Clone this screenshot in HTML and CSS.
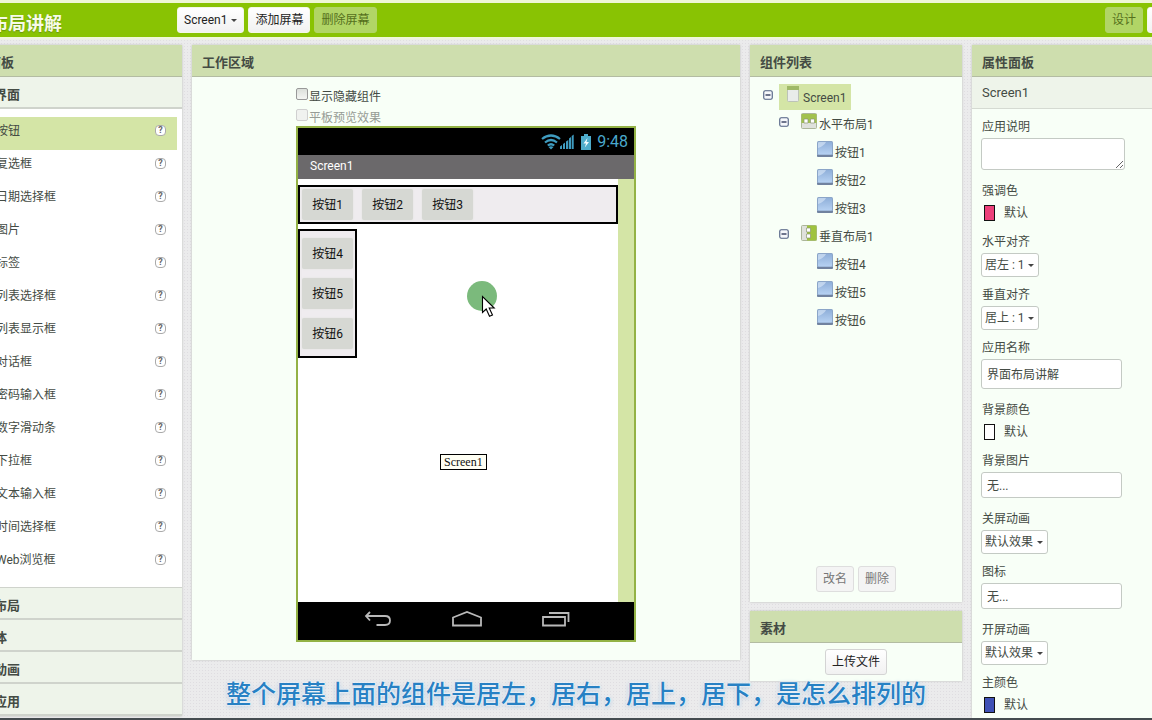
FILE: index.html
```html
<!DOCTYPE html>
<html lang="zh-CN">
<head>
<meta charset="utf-8">
<title>界面布局讲解</title>
<link rel="stylesheet" href="styles.css">
</head>
<body>
<svg class="defs" aria-hidden="true">
  <defs>
    <linearGradient id="blue" x1="0" y1="0" x2="0" y2="1"><stop offset="0" stop-color="#8fafd9"/><stop offset="1" stop-color="#b6d1f2"/></linearGradient>
    <symbol id="minus" viewBox="0 0 10 10"><rect x=".75" y=".75" width="8.5" height="8.5" rx="1.5" fill="#f6f8fb" stroke="#4d5d80" stroke-width="1.1"/><path d="M2.5 5h5" stroke="#222c50" stroke-width="1.3"/></symbol>
    <symbol id="button" viewBox="0 0 16 16"><rect width="16" height="16" rx="1.5" fill="#8ba5c8"/><rect x="1" y="1" width="14" height="12.5" rx="1" fill="url(#blue)"/><path d="M1 7V2q0-1 1-1h7Q7 5 1 7z" fill="#e4eefb" opacity=".55"/><path d="M0 14h16v.5q0 1.500-1.500 1.500h-13Q0 16 0 14.500z" fill="#71829f"/></symbol>
    <symbol id="screen" viewBox="0 0 12 16"><rect x=".5" y=".5" width="11" height="15" rx="1" fill="#e9ecea" stroke="#bcc3b8"/><path d="M0 0h12v4H0z" fill="#9fb967"/></symbol>
    <symbol id="horizontal" viewBox="0 0 16 16"><rect x=".5" y=".5" width="15" height="15" rx="1" fill="#dfe1dc" stroke="#acb69a"/><path d="M.5 1h15v9H.5z" fill="#a2c24e"/><path d="M3 6h4v4H3zM9.500 6h4v4h-4z" fill="#fff" stroke="#8b9673" stroke-width=".7"/></symbol>
    <symbol id="vertical" viewBox="0 0 16 16"><rect x=".5" y=".5" width="15" height="15" rx="1" fill="#dfe1dc" stroke="#acb69a"/><path d="M6 .5h9.500v15H6z" fill="#9fc33e"/><path d="M5.500 3h4v4h-4zM5.500 9h4v4h-4z" fill="#fff" stroke="#8b9673" stroke-width=".7"/></symbol>
  </defs>
</svg>
<div class="app">
  <header class="topbar">
    <h1 class="project">界面布局讲解</h1>
    <div class="actions">
      <button class="btn caret">Screen1</button>
      <button class="btn">添加屏幕</button>
      <button class="btn faded" disabled>删除屏幕</button>
    </div>
    <div class="views">
      <button class="btn faded" disabled>设计</button>
      <button class="btn">编程</button>
    </div>
  </header>

  <main class="columns">
    <section class="panel palette">
      <h2 class="panel-title">组件面板</h2>
      <button class="category open">用户界面</button>
      <ul class="items">
        <li class="item selected">按钮<button class="help" aria-label="帮助">?</button></li>
        <li class="item">复选框<button class="help" aria-label="帮助">?</button></li>
        <li class="item">日期选择框<button class="help" aria-label="帮助">?</button></li>
        <li class="item">图片<button class="help" aria-label="帮助">?</button></li>
        <li class="item">标签<button class="help" aria-label="帮助">?</button></li>
        <li class="item">列表选择框<button class="help" aria-label="帮助">?</button></li>
        <li class="item">列表显示框<button class="help" aria-label="帮助">?</button></li>
        <li class="item">对话框<button class="help" aria-label="帮助">?</button></li>
        <li class="item">密码输入框<button class="help" aria-label="帮助">?</button></li>
        <li class="item">数字滑动条<button class="help" aria-label="帮助">?</button></li>
        <li class="item">下拉框<button class="help" aria-label="帮助">?</button></li>
        <li class="item">文本输入框<button class="help" aria-label="帮助">?</button></li>
        <li class="item">时间选择框<button class="help" aria-label="帮助">?</button></li>
        <li class="item">Web浏览框<button class="help" aria-label="帮助">?</button></li>
      </ul>
      <button class="category">界面布局</button>
      <button class="category">多媒体</button>
      <button class="category">绘图动画</button>
      <button class="category">社交应用</button>
    </section>

    <section class="panel work">
      <h2 class="panel-title">工作区域</h2>
      <div class="stage">
        <label class="check"><input type="checkbox">显示隐藏组件</label>
        <label class="check off"><input type="checkbox" disabled>平板预览效果</label>
        <div class="phone">
          <div class="status">
            <svg width="34" height="16" viewBox="0 0 34 16" aria-hidden="true">
              <g fill="none" stroke="#3f9cc0" stroke-width="2.200"><path d="M1 5Q10-2 19 5"/><path d="M4 8.500q6-5 12 0"/><path d="M6.800 11.500q3.200-2.500 6.400 0"/></g><path d="M7.500 13q2.500-1.600 5 0L10 15.600z" fill="#3f9cc0"/>
              <path d="M19 15v-2.500l2-1.500v4zM22 15v-5l2-1.500V15zM25 15V7.500L27.300 6v9zM28 15V4.500l2-1.500v12zM30.700 15V2l2-1.500V15z" fill="#3f9cc0"/>
            </svg>
            <svg width="10" height="16" viewBox="0 0 10 16" aria-hidden="true"><path d="M3 0h4v2h3v14H0V2h3z" fill="#4faccb"/><path d="M6.500 4L2.500 9.500H5L3.800 13.500 8 8H5.500z" fill="#f3fcff"/></svg>
            <span class="clock">9:48</span>
          </div>
          <div class="app-title">Screen1</div>
          <div class="canvas">
            <div class="view">
              <div class="arrange row">
                <button class="tile">按钮1</button><button class="tile">按钮2</button><button class="tile">按钮3</button>
              </div>
              <div class="arrange col">
                <button class="tile">按钮4</button><button class="tile">按钮5</button><button class="tile">按钮6</button>
              </div>
              <div class="tip">Screen1</div>
              <svg class="pointer" width="32" height="38" viewBox="0 0 32 38" aria-hidden="true"><circle cx="15" cy="15" r="15" fill="#7bba7c"/><path d="M15.500 15.500v16l3.700-3.500 3.300 7.300 3-1.300-3.300-7h5z" fill="#fff" stroke="#000" stroke-width="1.100"/></svg>
            </div>
          </div>
          <div class="nav">
            <svg width="28" height="18" viewBox="0 0 28 18" aria-hidden="true"><path d="M6 2L2 6l4 4.500M2 6h19q5 0 5 4.500T21 15h-8.500" fill="none" stroke="#b9b9b9" stroke-width="1.800"/></svg>
            <svg width="32" height="18" viewBox="0 0 32 18" aria-hidden="true"><path d="M2 15.500V7.500L16 2l14 5.500v8z" fill="none" stroke="#b9b9b9" stroke-width="1.800"/></svg>
            <svg width="28" height="18" viewBox="0 0 28 18" aria-hidden="true"><path d="M1 7h22v8.500H1zM7 3h19.500v9" fill="none" stroke="#b9b9b9" stroke-width="1.800"/></svg>
          </div>
        </div>
      </div>
    </section>

    <div class="side">
      <section class="panel components">
        <h2 class="panel-title">组件列表</h2>
        <ul class="tree">
          <li class="node root"><svg class="toggle"><use href="#minus"/></svg><span class="picked"><svg class="sheet"><use href="#screen"/></svg>Screen1</span></li>
          <li class="node level1"><svg class="toggle"><use href="#minus"/></svg><svg class="kind"><use href="#horizontal"/></svg>水平布局1</li>
          <li class="node level2"><svg class="kind"><use href="#button"/></svg>按钮1</li>
          <li class="node level2"><svg class="kind"><use href="#button"/></svg>按钮2</li>
          <li class="node level2"><svg class="kind"><use href="#button"/></svg>按钮3</li>
          <li class="node level1"><svg class="toggle"><use href="#minus"/></svg><svg class="kind"><use href="#vertical"/></svg>垂直布局1</li>
          <li class="node level2"><svg class="kind"><use href="#button"/></svg>按钮4</li>
          <li class="node level2"><svg class="kind"><use href="#button"/></svg>按钮5</li>
          <li class="node level2"><svg class="kind"><use href="#button"/></svg>按钮6</li>
        </ul>
        <div class="buttons"><button class="btn muted" disabled>改名</button><button class="btn muted" disabled>删除</button></div>
      </section>
      <section class="panel">
        <h2 class="panel-title">素材</h2>
        <div class="buttons media"><button class="btn">上传文件</button></div>
      </section>
    </div>

    <section class="panel props">
      <h2 class="panel-title">属性面板</h2>
      <h3 class="subject">Screen1</h3>
      <form class="fields">
        <label for="about">应用说明</label>
        <textarea id="about" class="box"></textarea>
        <label class="roomy" for="accent">强调色</label>
        <button type="button" class="colour" id="accent"><span class="swatch pink"></span>默认</button>
        <label for="halign">水平对齐</label>
        <span class="pick"><select id="halign"><option>居左 : 1</option></select></span>
        <label for="valign">垂直对齐</label>
        <span class="pick"><select id="valign"><option>居上 : 1</option></select></span>
        <label for="name">应用名称</label>
        <input id="name" class="box tall" type="text" value="界面布局讲解">
        <label class="roomy" for="back">背景颜色</label>
        <button type="button" class="colour" id="back"><span class="swatch"></span>默认</button>
        <label for="image">背景图片</label>
        <input id="image" class="box" type="text" value="无...">
        <label class="roomy" for="close">关屏动画</label>
        <span class="pick"><select id="close"><option>默认效果</option></select></span>
        <label for="icon">图标</label>
        <input id="icon" class="box" type="text" value="无...">
        <label class="roomy" for="open">开屏动画</label>
        <span class="pick"><select id="open"><option>默认效果</option></select></span>
        <label for="primary">主颜色</label>
        <button type="button" class="colour" id="primary"><span class="swatch navy"></span>默认</button>
      </form>
    </section>
  </main>
</div>
<p class="caption">整个屏幕上面的组件是居左，居右，居上，居下，是怎么排列的</p>
</body>
</html>
```
FILE: styles.css
```css
* { box-sizing: border-box; }

body {
  margin: 0;
  height: 100vh;
  overflow: hidden;
  position: relative;
  font: 12px/20px Roboto, "Noto Sans CJK SC", sans-serif;
  color: #444b44;
  background: #e8e8ea radial-gradient(circle, #dfdde1 1px, #ebebec 1px) 0 0 / 3px 3px;
  border-bottom: 2px solid #454c50;
}

h1, h2, h3, ul, p { margin: 0; padding: 0; }
ul { list-style: none; }
button, input, select, textarea { font: inherit; color: inherit; margin: 0; }
svg { display: block; flex: none; }
.defs { position: absolute; width: 0; height: 0; }

/* the app is scrolled 50px to the right */
.app {
  margin-left: -50px;
  height: 100%;
  display: flex;
  flex-direction: column;
  gap: 8px;
}

.topbar {
  display: flex;
  align-items: center;
  height: 37px;
  flex: none;
  padding-left: 4px;
  background: #89c303;
  border-top: 3px solid #eef6d6;
  box-shadow: 0 2px 2px #f1f9d8;
  overflow: hidden;
}
.project { width: 223px; padding-top: 8px; font-size: 18px; line-height: 28px; font-weight: 600; color: #f7fbe8; text-shadow: 0 1px 1px #6b9610; }
.actions { display: flex; gap: 4px; flex: 1; }
.views { display: flex; gap: 4px; flex: none; width: 47px; }

.btn {
  height: 26px;
  padding: 0 6px;
  flex: none;
  border: 1px solid #d4d4d4;
  border-radius: 3px;
  background: linear-gradient(#fff, #f1f1f1);
  color: #222;
  line-height: 20px;
  white-space: nowrap;
}
.topbar .btn { border-color: #f4f8e8; }
.topbar .faded { background: #b1d566; border-color: #b1d566; color: #55701c; }
.btn.muted { background: #f4f4f4; color: #777; border-color: #dedede; }
.caret::after, .pick::after {
  content: "";
  border: 3px solid transparent;
  border-top-color: #444;
  border-bottom: 0;
}
.topbar .caret { display: flex; align-items: center; gap: 4px; }

.columns {
  flex: 1;
  min-height: 0;
  display: grid;
  grid-template-columns: 232px 1fr 212px 180px;
  gap: 10px;
  align-items: start;
}

.panel { background: #f8fff7; box-shadow: 0 0 2px #b9bcb5; }
.panel-title {
  height: 32px;
  padding: 8px 10px 0;
  background: #cedeae;
  border-bottom: 1px solid #b3bca2;
  font-size: 13px;
  line-height: 20px;
  font-weight: 600;
}

.palette .panel-title { padding-left: 12px; }
.category {
  display: block;
  width: 100%;
  height: 32px;
  padding: 6px 18px 0;
  border: 0;
  border-bottom: 2px solid #cfd3cc;
  background: #eef4ea;
  text-align: left;
  font-size: 13px;
  font-weight: 600;
}
.items { background: #fff; padding: 8px 5px 8px 0; border-bottom: 1px solid #cfd3cc; }
.item {
  display: flex;
  align-items: center;
  justify-content: space-between;
  height: 33px;
  padding: 0 11px 6px 46px;
}
.selected { background: #d4e5a6; }
.help {
  width: 11px;
  height: 11px;
  padding: 0;
  border: 1px solid #aaa;
  border-radius: 4px;
  background: #fff;
  font-size: 9px;
  line-height: 9px;
  font-weight: 700;
  color: #666;
}

.stage { width: 340px; margin-left: 104px; padding: 8px 0 18px; }
.check { display: flex; gap: 1px; height: 21px; line-height: 24px; }
.check input { appearance: none; width: 12px; height: 12px; margin-top: 3px; border: 1px solid #999; border-radius: 2px; background: linear-gradient(#dce0db, #f4f6f3); }
.off { height: 20px; color: #969c95; }
.off input { border-color: #d0d0d0; background: #f0f2ef; }

.phone { border: 2px solid #93b245; }
.status { display: flex; align-items: center; justify-content: flex-end; gap: 6px; height: 27px; padding-right: 6px; background: #000; }
.clock { font-size: 16px; color: #4aa8cc; }
.app-title { height: 24px; padding: 0 12px; background: #6b696b; color: #fff; line-height: 22px; }
.canvas { height: 423px; padding-right: 16px; background: #d4e5a6; }
.view { position: relative; height: 100%; padding-top: 6px; display: flex; flex-direction: column; align-items: flex-start; gap: 5px; background: #fff; }
.arrange { display: flex; border: 2px solid #000; background: #efecef; }
.row { width: 100%; height: 39px; gap: 9px; padding: 2px; }
.col { flex-direction: column; gap: 9px; padding: 7px 2px; }
.tile { width: 51px; height: 31px; padding: 0; border: 0; border-radius: 2px; background: #d6d8d3; box-shadow: 0 0 2px #dfe0dd; color: #111; }
.tip { position: absolute; left: 142px; top: 275px; height: 16px; padding: 0 3px; border: 1px solid #000; background: #fffff4; color: #111; font: 12px/14px "Liberation Serif", serif; }
.pointer { position: absolute; left: 169px; top: 102px; }
.nav { display: flex; justify-content: space-between; height: 38px; padding: 8px 64px 0 66px; background: #000; }

.side { display: grid; gap: 9px; }
.components { height: 557px; display: flex; flex-direction: column; }
.tree { flex: 1; padding: 7px 13px; }
.node { display: flex; align-items: flex-start; height: 28px; line-height: 24px; gap: 2px; }
.toggle { width: 10px; height: 10px; margin-top: 4px; }
.kind { width: 16px; height: 16px; }
.root { height: 27px; gap: 6px; }
.root .toggle { margin-top: 6px; }
.picked { display: flex; gap: 4px; height: 26px; padding: 2px 5px 0 8px; background: #d4e5a6; line-height: 24px; }
.sheet { width: 12px; height: 16px; }
.level1 { padding: 2px 0 0 16px; }
.level1 .toggle { margin-right: 10px; }
.level2 { padding: 2px 0 0 54px; }
.buttons { display: flex; justify-content: center; gap: 4px; padding-bottom: 10px; }
.media { padding: 6px 0; }

.subject { height: 32px; padding: 6px 10px; border-bottom: 1px solid #d5dad2; background: #eef4ea; font-size: 13px; font-weight: 400; }
.props { align-self: stretch; }
.fields { display: flex; flex-direction: column; align-items: flex-start; padding: 0 9px; }
.fields label { margin-top: 8px; padding-left: 1px; line-height: 21px; }
.fields .roomy { margin-top: 11px; }
.box { width: 141px; height: 26px; padding: 0 5px 2px; border: 1px solid #c4cac4; border-radius: 3px; background: #fff; }
textarea.box { width: 144px; height: 32px; }
.box.tall { height: 30px; }
.pick { display: grid; align-items: center; }
.pick select { grid-area: 1 / 1; appearance: none; height: 24px; padding: 0 13px 0 3px; border: 1px solid #c4cac4; border-radius: 3px; background: #fff; }
.pick::after { grid-area: 1 / 1; justify-self: end; margin-right: 5px; z-index: 1; pointer-events: none; }
.colour { display: flex; align-items: center; gap: 9px; height: 22px; padding: 0 3px; border: 0; background: none; }
.swatch { width: 11px; height: 16px; border: 1px solid #111; background: #fff; }
.pink { background: #ec407a; }
.navy { background: #3f51b5; }

.caption {
  position: absolute;
  left: 0;
  right: 0;
  bottom: 8px;
  text-align: center;
  font: 500 25px/36px "Noto Sans CJK SC", sans-serif;
  color: #2781c4;
  text-shadow: 0 0 2px #fff, 0 0 3px #fff, 0 1px 4px #8fb7dc;
  white-space: nowrap;
}
```
